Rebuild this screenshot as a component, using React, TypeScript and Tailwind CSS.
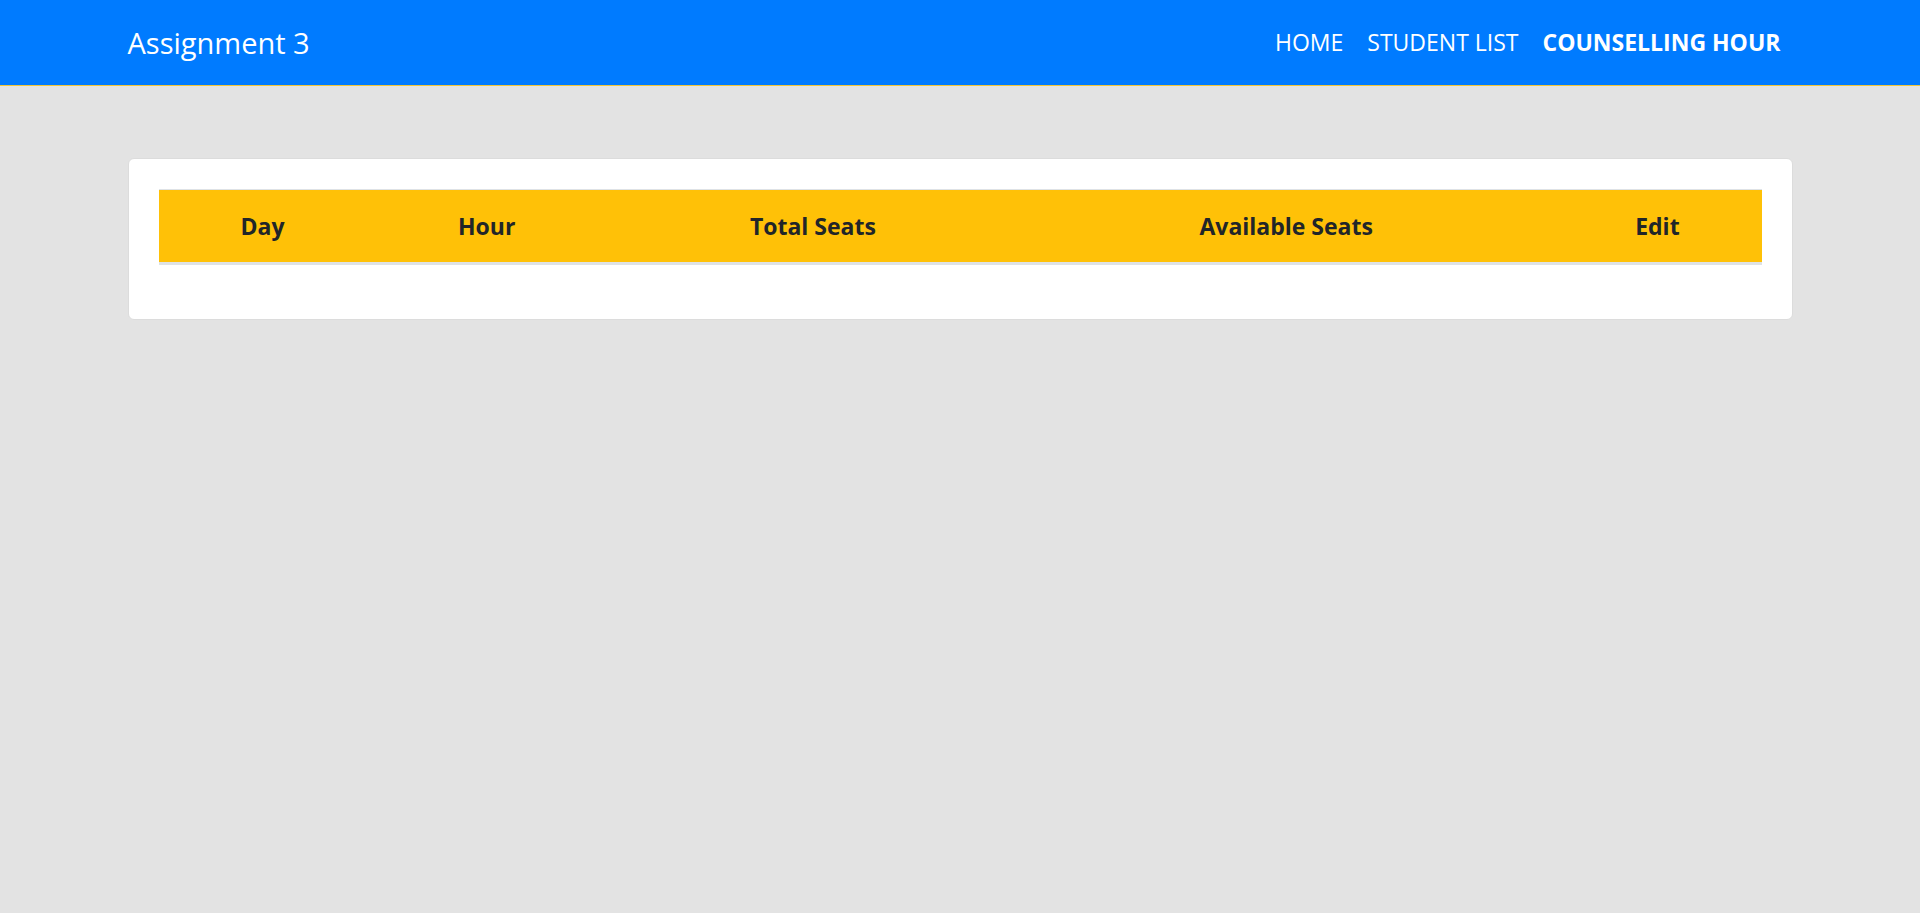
const columns = [
  { label: "Day", width: "w-[208px]" },
  { label: "Hour", width: "w-[240px]" },
  { label: "Total Seats", width: "w-[412px]" },
  { label: "Available Seats", width: "w-[534px]" },
  { label: "Edit", width: "w-[208px]" },
];

export default function App() {
  return (
    <div className="min-h-[913px] bg-[#e3e3e3] font-['Open_Sans',sans-serif] text-[#212529]">
      {/* navbar */}
      <nav className="h-[86px] border-b border-[#f0c63a] bg-[#007bff]">
        <div className="mx-auto flex h-full w-[1710px] items-center justify-between px-[22.5px]">
          <a className="text-[29px] leading-[45px] text-white">Assignment 3</a>
          <ul className="flex items-center">
            <li className="px-3 text-[23px] text-white">HOME</li>
            <li className="px-3 text-[23px] text-white">STUDENT LIST</li>
            <li className="px-3 text-[23px] font-bold text-white">COUNSELLING HOUR</li>
          </ul>
        </div>
      </nav>

      {/* content */}
      <main className="mx-auto w-[1710px] px-[22.5px] pt-[72px]">
        <div className="rounded-[6px] border border-[#dcdcdc] bg-white p-[30px]">
          <table className="mb-[24px] w-full table-fixed border-collapse">
            <thead>
              <tr className="bg-[#ffc107]">
                {columns.map((col) => (
                  <th
                    key={col.label}
                    className={`${col.width} border-t border-b-[3px] border-t-[#dee2e6] border-b-[#dee2e6] px-[18px] py-[18px] text-center text-[23px] leading-[36px] font-bold`}
                  >
                    {col.label}
                  </th>
                ))}
              </tr>
            </thead>
            <tbody />
          </table>
        </div>
      </main>
    </div>
  );
}
